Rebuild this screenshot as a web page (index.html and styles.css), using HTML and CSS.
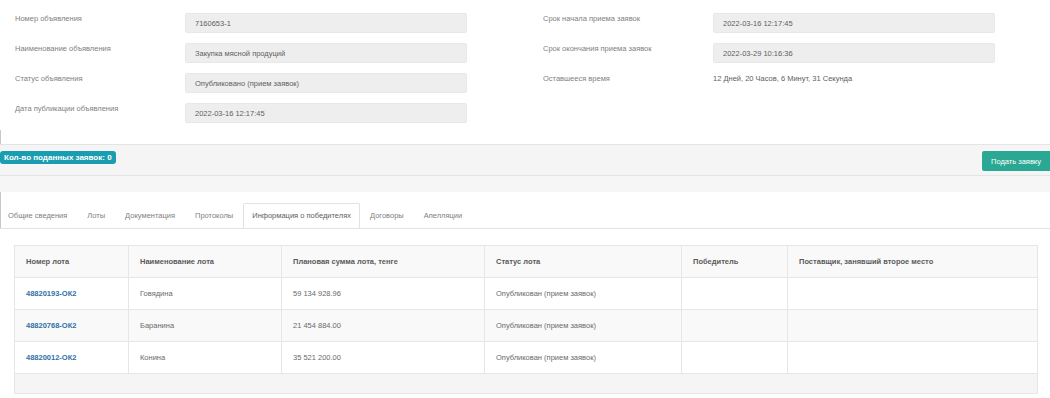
FILE: index.html
```html
<!DOCTYPE html>
<html lang="ru">
<head>
    <meta charset="UTF-8">
    <meta name="viewport" content="width=device-width, initial-scale=1.0">
    <title>Объявление 7160653-1</title>
    <link rel="stylesheet" href="styles.css">
</head>
<body>
    <div class="info">
        <div class="info-col">
            <div class="field">
                <div class="field-label">Номер объявления</div>
                <div class="field-value">7160653-1</div>
            </div>
            <div class="field">
                <div class="field-label">Наименование объявления</div>
                <div class="field-value">Закупка мясной продуций</div>
            </div>
            <div class="field">
                <div class="field-label">Статус объявления</div>
                <div class="field-value">Опубликовано (прием заявок)</div>
            </div>
            <div class="field">
                <div class="field-label">Дата публикации объявления</div>
                <div class="field-value">2022-03-16 12:17:45</div>
            </div>
        </div>
        <div class="info-col">
            <div class="field">
                <div class="field-label">Срок начала приема заявок</div>
                <div class="field-value">2022-03-16 12:17:45</div>
            </div>
            <div class="field">
                <div class="field-label">Срок окончания приема заявок</div>
                <div class="field-value">2022-03-29 10:16:36</div>
            </div>
            <div class="field">
                <div class="field-label">Оставшееся время</div>
                <div class="field-text">12 Дней, 20 Часов, 6 Минут, 31 Секунда</div>
            </div>
        </div>
    </div>

    <div class="panel">
        <div class="panel-bar">
            <span class="badge">Кол-во поданных заявок: 0</span>
            <button class="apply-button">Подать заявку</button>
        </div>
        <div class="panel-strip"></div>
        <ul class="tabs">
            <li>Общие сведения</li>
            <li>Лоты</li>
            <li>Документация</li>
            <li>Протоколы</li>
            <li class="active">Информация о победителях</li>
            <li>Договоры</li>
            <li>Апелляции</li>
        </ul>
    </div>

    <table class="lots">
        <colgroup>
            <col class="c1"><col class="c2"><col class="c3"><col class="c4"><col class="c5"><col class="c6">
        </colgroup>
        <thead>
            <tr>
                <th>Номер лота</th>
                <th>Наименование лота</th>
                <th>Плановая сумма лота, тенге</th>
                <th>Статус лота</th>
                <th>Победитель</th>
                <th>Поставщик, занявший второе место</th>
            </tr>
        </thead>
        <tbody>
            <tr>
                <td><a href="#">48820193-ОК2</a></td>
                <td>Говядина</td>
                <td>59 134 928.96</td>
                <td>Опубликован (прием заявок)</td>
                <td></td>
                <td></td>
            </tr>
            <tr>
                <td><a href="#">48820768-ОК2</a></td>
                <td>Баранина</td>
                <td>21 454 884.00</td>
                <td>Опубликован (прием заявок)</td>
                <td></td>
                <td></td>
            </tr>
            <tr>
                <td><a href="#">48820012-ОК2</a></td>
                <td>Конина</td>
                <td>35 521 200.00</td>
                <td>Опубликован (прием заявок)</td>
                <td></td>
                <td></td>
            </tr>
        </tbody>
        <tfoot>
            <tr><td colspan="6"></td></tr>
        </tfoot>
    </table>
</body>
</html>
```

FILE: styles.css
```css
body {
    margin: 0;
    padding: 0;
    background-color: #fff;
    font-family: "Liberation Sans", Arial, sans-serif;
    font-size: 7.5px;
    color: #6a6a6a;
}
.info {
    display: flex;
    padding-top: 13px;
    height: 117px;
}
.info-col {
    width: 528px;
    flex-shrink: 0;
    padding-left: 15px;
    box-sizing: border-box;
}
.info-col + .info-col {
    width: auto;
    flex: 1;
}
.field {
    display: flex;
    align-items: flex-start;
    margin-bottom: 10px;
}
.field-label {
    width: 170px;
    line-height: 11px;
    color: #808080;
}
.field-value {
    width: 282px;
    height: 20px;
    line-height: 20px;
    box-sizing: border-box;
    padding-left: 9px;
    background-color: #eeeeee;
    border: 1px solid #e8e8e8;
    border-radius: 2px;
    color: #5e5e5e;
}
.field-text {
    line-height: 11px;
    color: #5e5e5e;
}
.panel {
    border-left: 1px solid #c8c8c8;
    padding-top: 14px;
}
.panel-bar {
    display: flex;
    align-items: flex-start;
    justify-content: space-between;
    height: 32px;
    box-sizing: border-box;
    padding-top: 6px;
    margin-left: -1px;
    background-color: #f5f5f5;
    border-top: 1px solid #e4e4e4;
    border-bottom: 1px solid #e4e4e4;
}
.badge {
    padding: 0 4px;
    height: 13px;
    line-height: 13px;
    background-color: #1b9db1;
    color: #fff;
    font-weight: bold;
    font-size: 8px;
    border-radius: 3px;
}
.apply-button {
    width: 68px;
    height: 20px;
    padding: 0;
    border: none;
    border-radius: 2px 0 0 2px;
    background-color: #2aa893;
    color: #fff;
    font-family: inherit;
    font-size: 7.5px;
}
.panel-strip {
    height: 16px;
    background-color: #f6f6f6;
    margin-left: -1px;
}
.tabs {
    display: flex;
    list-style: none;
    margin: 11px 0 0 -3px;
    padding: 0;
    height: 25px;
    border-bottom: 1px solid #e2e2e2;
}
.tabs li {
    padding: 0 9px;
    line-height: 24px;
    color: #808080;
    border: 1px solid transparent;
    border-bottom: none;
    border-radius: 2px 2px 0 0;
}
.tabs li.active {
    padding: 0 8px;
    color: #5e5e5e;
    background-color: #fff;
    border-color: #e2e2e2;
    height: 25px;
    box-sizing: border-box;
    margin-bottom: -1px;
}
.lots {
    margin: 16px 0 0 14px;
    width: 1023px;
    border-collapse: collapse;
    table-layout: fixed;
    border: 1px solid #e2e2e2;
}
.c1 { width: 114px; }
.c2 { width: 153px; }
.c3 { width: 203px; }
.c4 { width: 197px; }
.c5 { width: 106px; }
.c6 { width: 250px; }
.lots th,
.lots td {
    height: 32px;
    padding: 0 11px;
    box-sizing: border-box;
    text-align: left;
    vertical-align: middle;
    border: 1px solid #e6e6e6;
}
.lots th {
    background-color: #f9f9f9;
    color: #5a5a5a;
    font-weight: bold;
}
.lots tbody tr:nth-child(even) td {
    background-color: #f9f9f9;
}
.lots a {
    color: #2f6fa7;
    font-weight: bold;
    text-decoration: none;
}
.lots tfoot td {
    height: 20px;
    background-color: #f5f5f5;
}
```
